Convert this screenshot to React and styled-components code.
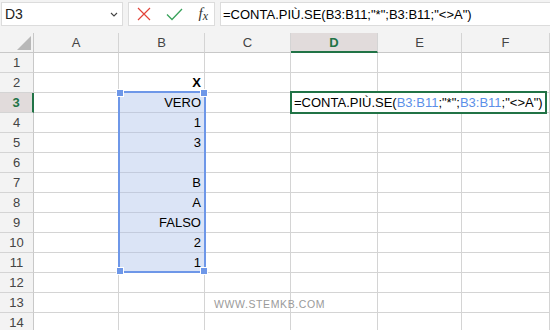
import React from "react";
import styled, { createGlobalStyle } from "styled-components";

const GlobalStyle = createGlobalStyle`
  html, body { margin: 0; padding: 0; background: #fff; }
  body { font-family: "Liberation Sans", Arial, sans-serif; overflow: hidden; }
`;

const COLS = ["A", "B", "C", "D", "E", "F"];
const ROWS = 14;
const values = {
  2: "X",
  3: "VERO",
  4: "1",
  5: "3",
  6: "",
  7: "B",
  8: "A",
  9: "FALSO",
  10: "2",
  11: "1",
};

export default function App() {
  return (
    <Window>
      <GlobalStyle />
      <FormulaBar>
        <NameBox>
          <span>D3</span>
          <Chevron viewBox="0 0 8 5">
            <path d="M1 1 L4 4 L7 1" fill="none" stroke="#444" strokeWidth="1.1" />
          </Chevron>
        </NameBox>
        <ButtonBox>
          <svg width="14" height="14" viewBox="0 0 14 14">
            <path d="M1 1 L13 13 M13 1 L1 13" stroke="#e2443a" strokeWidth="1.2" />
          </svg>
          <svg width="17" height="13" viewBox="0 0 17 13">
            <path d="M1 6.5 L6 11.5 L16 1" fill="none" stroke="#3aa35c" strokeWidth="1.3" />
          </svg>
          <Fx>
            f<sub>x</sub>
          </Fx>
        </ButtonBox>
        <FormulaInput>=CONTA.PIÙ.SE(B3:B11;"*";B3:B11;"&lt;&gt;A")</FormulaInput>
      </FormulaBar>

      <Sheet>
        <Corner>
          <Triangle />
        </Corner>
        {COLS.map((c) => (
          <ColHeader key={c} $active={c === "D"}>
            {c}
          </ColHeader>
        ))}

        {Array.from({ length: ROWS }, (_, i) => i + 1).map((r) => (
          <React.Fragment key={r}>
            <RowHeader $active={r === 3}>{r}</RowHeader>
            {COLS.map((c) => (
              <Cell
                key={c}
                $selected={c === "B" && r >= 3 && r <= 11}
                $bold={c === "B" && r === 2}
              >
                {c === "B" ? values[r] : ""}
              </Cell>
            ))}
          </React.Fragment>
        ))}

        <Selection>
          <Handle $pos="tl" />
          <Handle $pos="tr" />
          <Handle $pos="bl" />
          <Handle $pos="br" />
        </Selection>

        <Editor>
          =CONTA.PIÙ.SE(<Ref>B3:B11</Ref>;"*";<Ref>B3:B11</Ref>;"&lt;&gt;A")
        </Editor>

        <Watermark>WWW.STEMKB.COM</Watermark>
      </Sheet>
    </Window>
  );
}

const Window = styled.div`
  width: 550px;
  height: 330px;
  overflow: hidden;
  background: #fff;
`;

const FormulaBar = styled.div`
  height: 33px;
  box-sizing: border-box;
  padding: 2px 0 7px 1px;
  display: flex;
  gap: 5px;
  background: #f3f3f3;
`;

const Box = styled.div`
  box-sizing: border-box;
  height: 24px;
  background: #fff;
  border: 1px solid #dcdcdc;
  display: flex;
  align-items: center;
`;

const NameBox = styled(Box)`
  width: 122px;
  padding: 0 4px 0 3px;
  justify-content: space-between;
  font-size: 14px;
  color: #222;
`;

const Chevron = styled.svg`
  width: 8px;
  height: 5px;
`;

const ButtonBox = styled(Box)`
  width: 87px;
  padding: 0 6px 0 8px;
  justify-content: space-between;
`;

const Fx = styled.span`
  font-family: "Liberation Serif", "Times New Roman", serif;
  font-style: italic;
  font-size: 15px;
  color: #333;
  sub {
    font-size: 12px;
    vertical-align: -2px;
  }
`;

const FormulaInput = styled(Box)`
  flex: 1;
  padding-left: 2px;
  font-size: 13px;
  color: #000;
  white-space: nowrap;
  border-right: none;
`;

const Sheet = styled.div`
  position: relative;
  display: grid;
  grid-template-columns: 34px 85px 86px 86px 87px 84px 1fr;
  grid-auto-rows: 20px;
  font-size: 13px;
`;

const Corner = styled.div`
  position: relative;
  background: #f3f3f3;
  border-right: 1px solid #c8c8c8;
  border-bottom: 1px solid #c8c8c8;
`;

const Triangle = styled.div`
  position: absolute;
  right: 2px;
  bottom: 2px;
  width: 0;
  height: 0;
  border-left: 14px solid transparent;
  border-bottom: 14px solid #b8b8b8;
`;

const ColHeader = styled.div`
  box-sizing: border-box;
  display: flex;
  align-items: center;
  justify-content: center;
  background: ${({ $active }) => ($active ? "#e1dbdb" : "#f3f3f3")};
  color: ${({ $active }) => ($active ? "#217346" : "#444")};
  font-weight: ${({ $active }) => ($active ? "bold" : "normal")};
  border-right: 1px solid #d4d4d4;
  border-bottom: ${({ $active }) => ($active ? "2px solid #217346" : "1px solid #c8c8c8")};
`;

const RowHeader = styled.div`
  box-sizing: border-box;
  display: flex;
  align-items: center;
  justify-content: center;
  background: ${({ $active }) => ($active ? "#e1dbdb" : "#f3f3f3")};
  color: ${({ $active }) => ($active ? "#217346" : "#444")};
  font-weight: ${({ $active }) => ($active ? "bold" : "normal")};
  border-right: ${({ $active }) => ($active ? "2px solid #217346" : "1px solid #c8c8c8")};
  border-bottom: 1px solid #d4d4d4;
`;

const Cell = styled.div`
  box-sizing: border-box;
  display: flex;
  align-items: center;
  justify-content: flex-end;
  padding-right: 3px;
  color: #000;
  font-weight: ${({ $bold }) => ($bold ? "bold" : "normal")};
  background: ${({ $selected }) => ($selected ? "#dbe4f6" : "#fff")};
  border-right: 1px solid #d4d4d4;
  border-bottom: 1px solid ${({ $selected }) => ($selected ? "#c3cbdd" : "#d4d4d4")};
  white-space: nowrap;
`;

const Selection = styled.div`
  position: absolute;
  left: 118px;
  top: 58px;
  width: 88px;
  height: 182px;
  box-sizing: border-box;
  border: 2px solid #6e97e8;
  pointer-events: none;
`;

const handlePos = {
  tl: "left: -4px; top: -4px;",
  tr: "right: -4px; top: -4px;",
  bl: "left: -4px; bottom: -4px;",
  br: "right: -4px; bottom: -4px;",
};

const Handle = styled.div`
  position: absolute;
  ${({ $pos }) => handlePos[$pos]}
  width: 6px;
  height: 6px;
  background: #6e97e8;
  border: 1px solid #fff;
`;

const Editor = styled.div`
  position: absolute;
  left: 290px;
  top: 58px;
  width: 257px;
  height: 23px;
  box-sizing: border-box;
  border: 2px solid #217346;
  background: #fff;
  display: flex;
  align-items: center;
  padding-left: 2px;
  white-space: nowrap;
  color: #000;
`;

const Ref = styled.span`
  color: #5b8fe8;
`;

const Watermark = styled.div`
  position: absolute;
  left: 214px;
  top: 265px;
  font-size: 10.5px;
  letter-spacing: 0.6px;
  color: #9a9a9a;
`;
